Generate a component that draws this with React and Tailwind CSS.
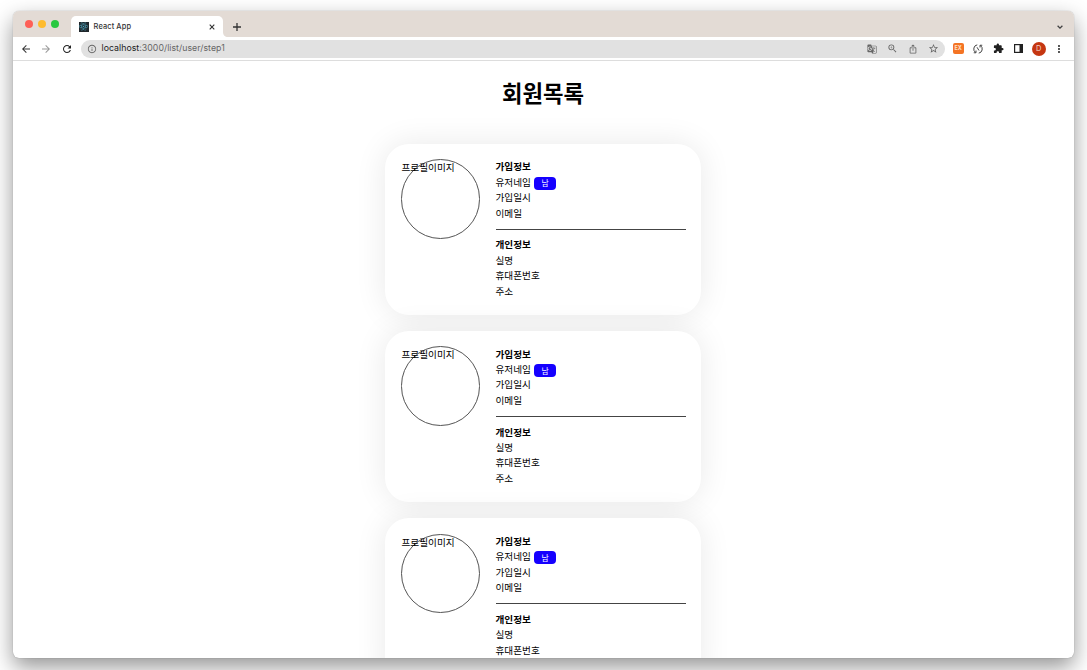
import React from 'react';
import { FaReact } from 'react-icons/fa';
import {
  MdArrowBack,
  MdArrowForward,
  MdRefresh,
  MdInfoOutline,
  MdGTranslate,
  MdZoomIn,
  MdIosShare,
  MdStarBorder,
  MdExtension,
  MdMoreVert,
} from 'react-icons/md';

function TabBar() {
  return (
    <div className="flex h-[26px] shrink-0 items-end bg-[#e3dbd5]">
      <div className="flex h-full items-center gap-[4.8px] pl-[12.500px] pr-[12px]">
        <span className="size-2 rounded-full bg-[#fe5f57]" />
        <span className="size-2 rounded-full bg-[#febb2e]" />
        <span className="size-2 rounded-full bg-[#28c840]" />
      </div>
      <div className="flex h-[21px] w-[152px] items-center rounded-t-[5px] bg-white pl-2 pr-[7.500px]">
        <span className="flex size-[10px] items-center justify-center bg-[#20262b]">
          <FaReact className="size-[9px] text-[#4fa9c2]" />
        </span>
        <span className="ml-[5px] text-[7.4px] font-medium tracking-[0.12px] text-[#333]">React App</span>
        <svg className="ml-auto size-[6px]" viewBox="0 0 6 6" fill="none" stroke="#333" strokeWidth="1.1">
          <path d="M0.7 0.7l4.6 4.6M5.3 0.7L0.7 5.3" />
        </svg>
      </div>
      <svg className="h-[5px] w-[5px] shrink-0" viewBox="0 0 5 5">
        <path d="M0 0v5h5C2 5 0 3 0 0z" fill="#fff" />
      </svg>
      <div className="flex h-[21px] items-center pl-[5px]">
        <svg className="size-[8px]" viewBox="0 0 8 8" fill="none" stroke="#333" strokeWidth="1.3">
          <path d="M4 0v8M0 4h8" />
        </svg>
      </div>
      <div className="ml-auto flex h-[21px] items-center pr-[11px]">
        <svg className="size-[6px]" viewBox="0 0 6 6" fill="none" stroke="#444" strokeWidth="1.3">
          <path d="M0.6 1.7 3 4.1l2.4-2.4" />
        </svg>
      </div>
    </div>
  );
}

function Toolbar() {
  return (
    <div className="flex h-6 shrink-0 items-center border-b border-[#dddddd] bg-white pl-[7.500px]">
      <MdArrowBack className="size-[12px] text-[#333]" />
      <MdArrowForward className="ml-[8px] size-[12px] text-[#999]" />
      <MdRefresh className="ml-[8.500px] size-[12px] text-[#222]" />
      <div className="ml-[8px] flex h-[18px] w-[864px] items-center rounded-full bg-[#e1e1e1] pl-[6px] pr-[5.500px]">
        <MdInfoOutline className="size-[10px] text-[#666]" />
        <span className="ml-[5px] mt-[1px] text-[8.75px] tracking-[0.04px] text-[#666]">
          <span className="text-[#222]">localhost</span>:3000/list/user/step1
        </span>
        <div className="ml-auto flex items-center gap-[10px] text-[#666]">
          <MdGTranslate className="size-[10px]" />
          <MdZoomIn className="size-[11px]" />
          <MdIosShare className="size-[10px]" />
          <MdStarBorder className="size-[11px]" />
        </div>
      </div>
      <span className="ml-[8.200px] flex size-[11px] items-center justify-center rounded-[2px] bg-[#f47424] text-[5.5px] font-bold text-[#ffe0c8]">
        EX
      </span>
      <svg className="ml-[9.500px] size-[10px]" viewBox="0 0 20 20" fill="none" stroke="#444" strokeWidth="2">
        <path d="M8.500 1.700A8.400 8.400 0 0 0 5 16.800M11.500 18.300A8.400 8.400 0 0 0 15 3.200" />
        <path d="M1.500 17.500H6V13M18.500 2.500H14V7M8 6.500l4 6.500" />
      </svg>
      <MdExtension className="ml-[9.500px] size-[11px] text-[#222]" />
      <svg className="ml-[10.500px] h-[9px] w-[9px]" viewBox="0 0 9 9">
        <rect x="0.600" y="0.600" width="7.800" height="7.800" fill="white" stroke="#222" strokeWidth="1.200" />
        <rect x="5.500" y="0.600" width="2.900" height="7.800" fill="#222" />
      </svg>
      <span className="ml-[8.500px] flex size-[14px] items-center justify-center rounded-full bg-[#c53611] text-[7.500px] leading-[14px] text-[#f3d2c8]">
        <span className="mt-[1px]">D</span>
      </span>
      <MdMoreVert className="ml-[7.500px] size-[12px] text-[#333]" />
    </div>
  );
}

function MemberCard({ children }) {
  return (
    <article className="flex h-[171.400px] w-[316px] shrink-0 gap-[15.500px] rounded-[24px] bg-white px-[15.500px] py-[15.500px] text-[9.650px] leading-[15.400px] shadow-[0_0_32px_rgba(0,0,0,0.09)]">
      <div className="size-[79.500px] shrink-0 whitespace-nowrap rounded-full border border-[#555] leading-[14px]">
        프로필이미지
      </div>
      <div className="flex-1 pt-[0.200px]">
        <h2 className="font-bold">가입정보</h2>
        <div className="flex items-center">
          유저네임
          <span className="ml-[3px] mt-[1px] flex h-[13px] w-[22.500px] items-center justify-center rounded-[4px] bg-[#1500ff] text-[7.800px] text-white">
            남
          </span>
        </div>
        <p>가입일시</p>
        <p>이메일</p>
        <hr className="my-[7.700px] border-0 border-t border-[#444]" />
        <h2 className="font-bold">개인정보</h2>
        <p>실명</p>
        <p>휴대폰번호</p>
        {children}
      </div>
    </article>
  );
}

export default function App() {
  return (
    <div className="h-[670px] w-[1087px] overflow-hidden bg-white pl-[12.500px] pt-[11px] font-['Inter','Noto_Sans_CJK_KR',sans-serif]">
      <div className="flex h-[647px] w-[1061px] flex-col overflow-hidden rounded-[6px] bg-white shadow-[0_0_1px_rgba(0,0,0,0.4),0_9px_22px_rgba(0,0,0,0.42)]">
        <TabBar />
        <Toolbar />
        <main className="flex min-h-0 flex-1 flex-col items-center overflow-hidden font-['Noto_Sans_CJK_KR',sans-serif] text-black">
          <h1 className="mt-[14.400px] shrink-0 text-[22.300px] font-bold leading-[34px]">회원목록</h1>
          <div className="mt-[34.400px] flex flex-col gap-[15.800px]">
            <MemberCard>
              <p>주소</p>
            </MemberCard>
            <MemberCard>
              <p>주소</p>
            </MemberCard>
            <MemberCard />
          </div>
        </main>
      </div>
    </div>
  );
}
